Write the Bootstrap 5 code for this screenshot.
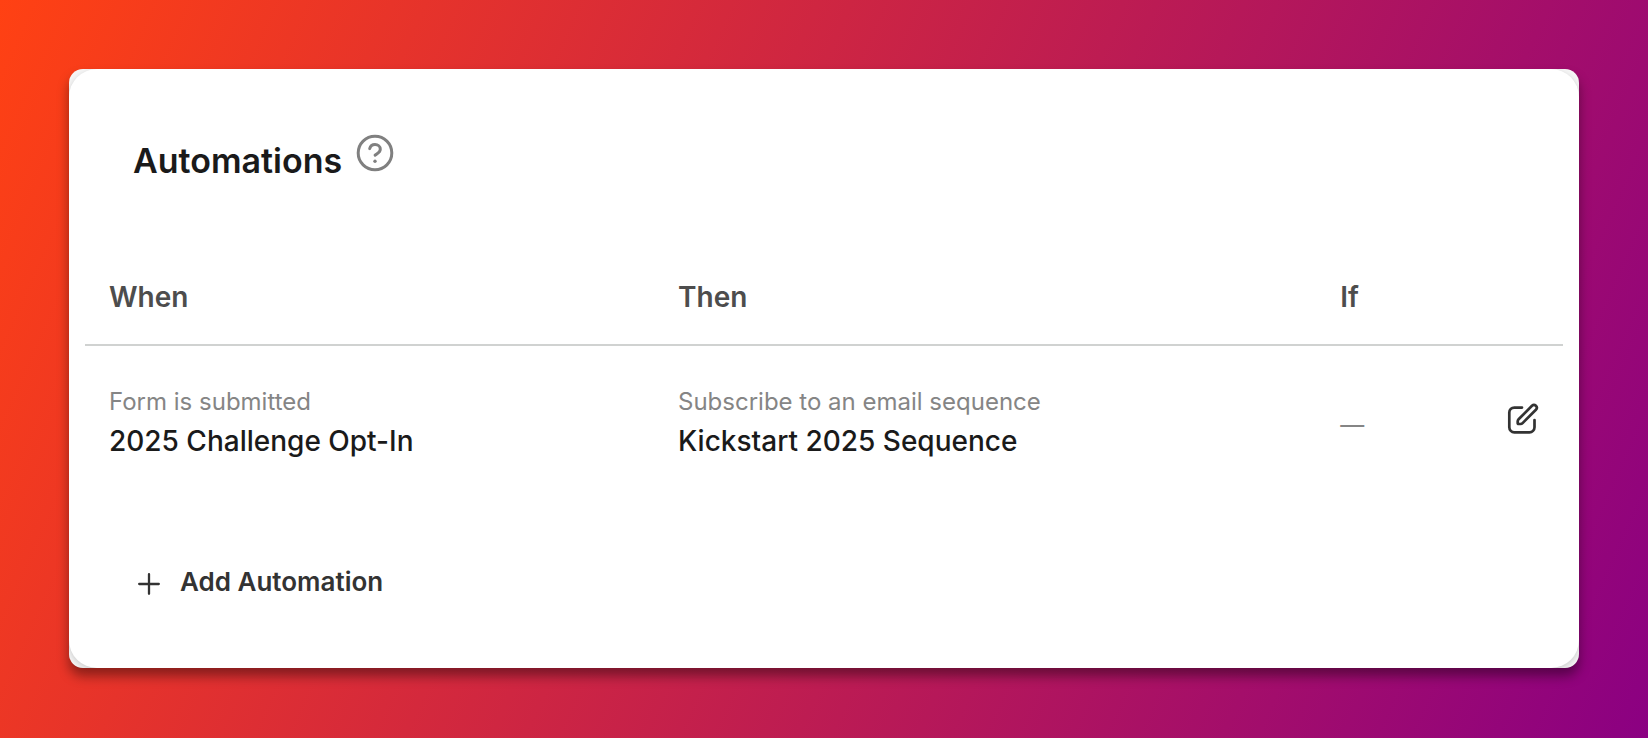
<!DOCTYPE html>
<html lang="en">
<head>
<meta charset="utf-8">
<meta name="viewport" content="width=device-width, initial-scale=1">
<title>Automations</title>
<link href="https://cdn.jsdelivr.net/npm/bootstrap@5.3.0/dist/css/bootstrap.min.css" rel="stylesheet">
<style>
  body {
    font-family: Inter, "Liberation Sans", sans-serif;
    color: #1a1a1a;
    background: linear-gradient(114deg, #ff4113, #8b0082) no-repeat;
    padding: 69px;
  }
  .panel-frame {
    border-radius: 14px;
    background: #f6f6f6;
    box-shadow: 0 8px 12px rgba(0, 0, 0, .4);
  }
  .panel {
    background: #fff;
    border-radius: 28px;
    box-shadow: 0 2px 6px rgba(0, 0, 0, .18);
    padding: 72px 16px 70px;
  }
  .panel-head { padding: 0 48px; margin-bottom: 68px; }
  .panel-title { font-size: 34px; line-height: 40px; font-weight: 600; }
  .help-btn { color: #808080; margin-left: 14px; margin-top: -16px; }
  .rules { --bs-table-bg: transparent; line-height: 40px; }
  .rules > thead th {
    padding: 28px 24px 27px; font-size: 28px; font-weight: 600; color: #4d4d4d;
    border-bottom: 2px solid #d0d2d1;
  }
  .rules > tbody td { padding: 38px 24px 36px; border: 0; }
  .col-when { width: 38.5%; }
  .col-then { width: 44.8%; }
  .rule-kind { font-size: 24px; line-height: 36px; color: #858585; }
  .rule-name { font-size: 28px; line-height: 42px; font-weight: 500; color: #1a1a1a; }
  .edit-btn { color: #333; }
  .panel-foot { margin-top: 68px; padding: 0 53px; }
  .add-btn { gap: 20px; font-size: 26px; line-height: 32px; font-weight: 600; color: #333; }
</style>
</head>
<body class="min-vh-100">
<main class="panel-frame overflow-hidden">
  <section class="panel">
    <header class="panel-head d-flex align-items-center">
      <h1 class="panel-title mb-0">Automations</h1>
      <button type="button" class="help-btn btn p-0 border-0 d-flex" aria-label="Help">
        <svg width="38" height="38" viewBox="0 0 38 38" fill="none" stroke="currentColor" stroke-width="3" stroke-linecap="round" stroke-linejoin="round">
          <circle cx="19" cy="19" r="16.8"/>
          <path d="M13.700 14.600c.6-2.400 2.700-4.100 5.300-4.100 3 0 5.300 1.900 5.300 4.700 0 3.400-3.500 4.400-5.200 6"/>
          <circle cx="19" cy="27.300" r="1.700" fill="currentColor" stroke="none"/>
        </svg>
      </button>
    </header>
    <table class="rules table mb-0 align-middle">
      <thead>
        <tr>
          <th scope="col" class="col-when">When</th>
          <th scope="col" class="col-then">Then</th>
          <th scope="col">If</th>
          <th scope="col"></th>
        </tr>
      </thead>
      <tbody>
        <tr>
          <td><div class="rule-kind">Form is submitted</div><div class="rule-name">2025 Challenge Opt-In</div></td>
          <td><div class="rule-kind">Subscribe to an email sequence</div><div class="rule-name">Kickstart 2025 Sequence</div></td>
          <td><div class="rule-kind pt-1">—</div></td>
          <td>
            <button type="button" class="edit-btn btn p-0 pb-2 border-0 d-flex ms-auto" aria-label="Edit automation">
              <svg width="32" height="32" viewBox="0 0 32 32" fill="none" stroke="currentColor" stroke-width="2.700" stroke-linecap="round" stroke-linejoin="round">
                <path d="M15 4.600H7.300a5 5 0 0 0-5 5V24.300a5 5 0 0 0 5 5H22.500a5 5 0 0 0 5-5V17"/>
                <path d="M11.600 16.200 25 2.800a2.700 2.700 0 0 1 3.900 3.900L15.600 20.100a3 3 0 0 1-2.100.9H11.400a.7.700 0 0 1-.7-.7V18.300a3 3 0 0 1 .9-2.100z"/>
              </svg>
            </button>
          </td>
        </tr>
      </tbody>
    </table>
    <div class="panel-foot d-flex">
      <button type="button" class="add-btn btn p-0 border-0 d-flex align-items-center">
        <svg class="mt-1" width="22" height="22" viewBox="0 0 22 22" fill="none" stroke="currentColor" stroke-width="2.300" stroke-linecap="round"><path d="M11 1.200v19.600M1.200 11h19.600"/></svg>
        Add Automation
      </button>
    </div>
  </section>
</main>
<script src="https://cdn.jsdelivr.net/npm/bootstrap@5.3.0/dist/js/bootstrap.bundle.min.js"></script>
</body>
</html>
